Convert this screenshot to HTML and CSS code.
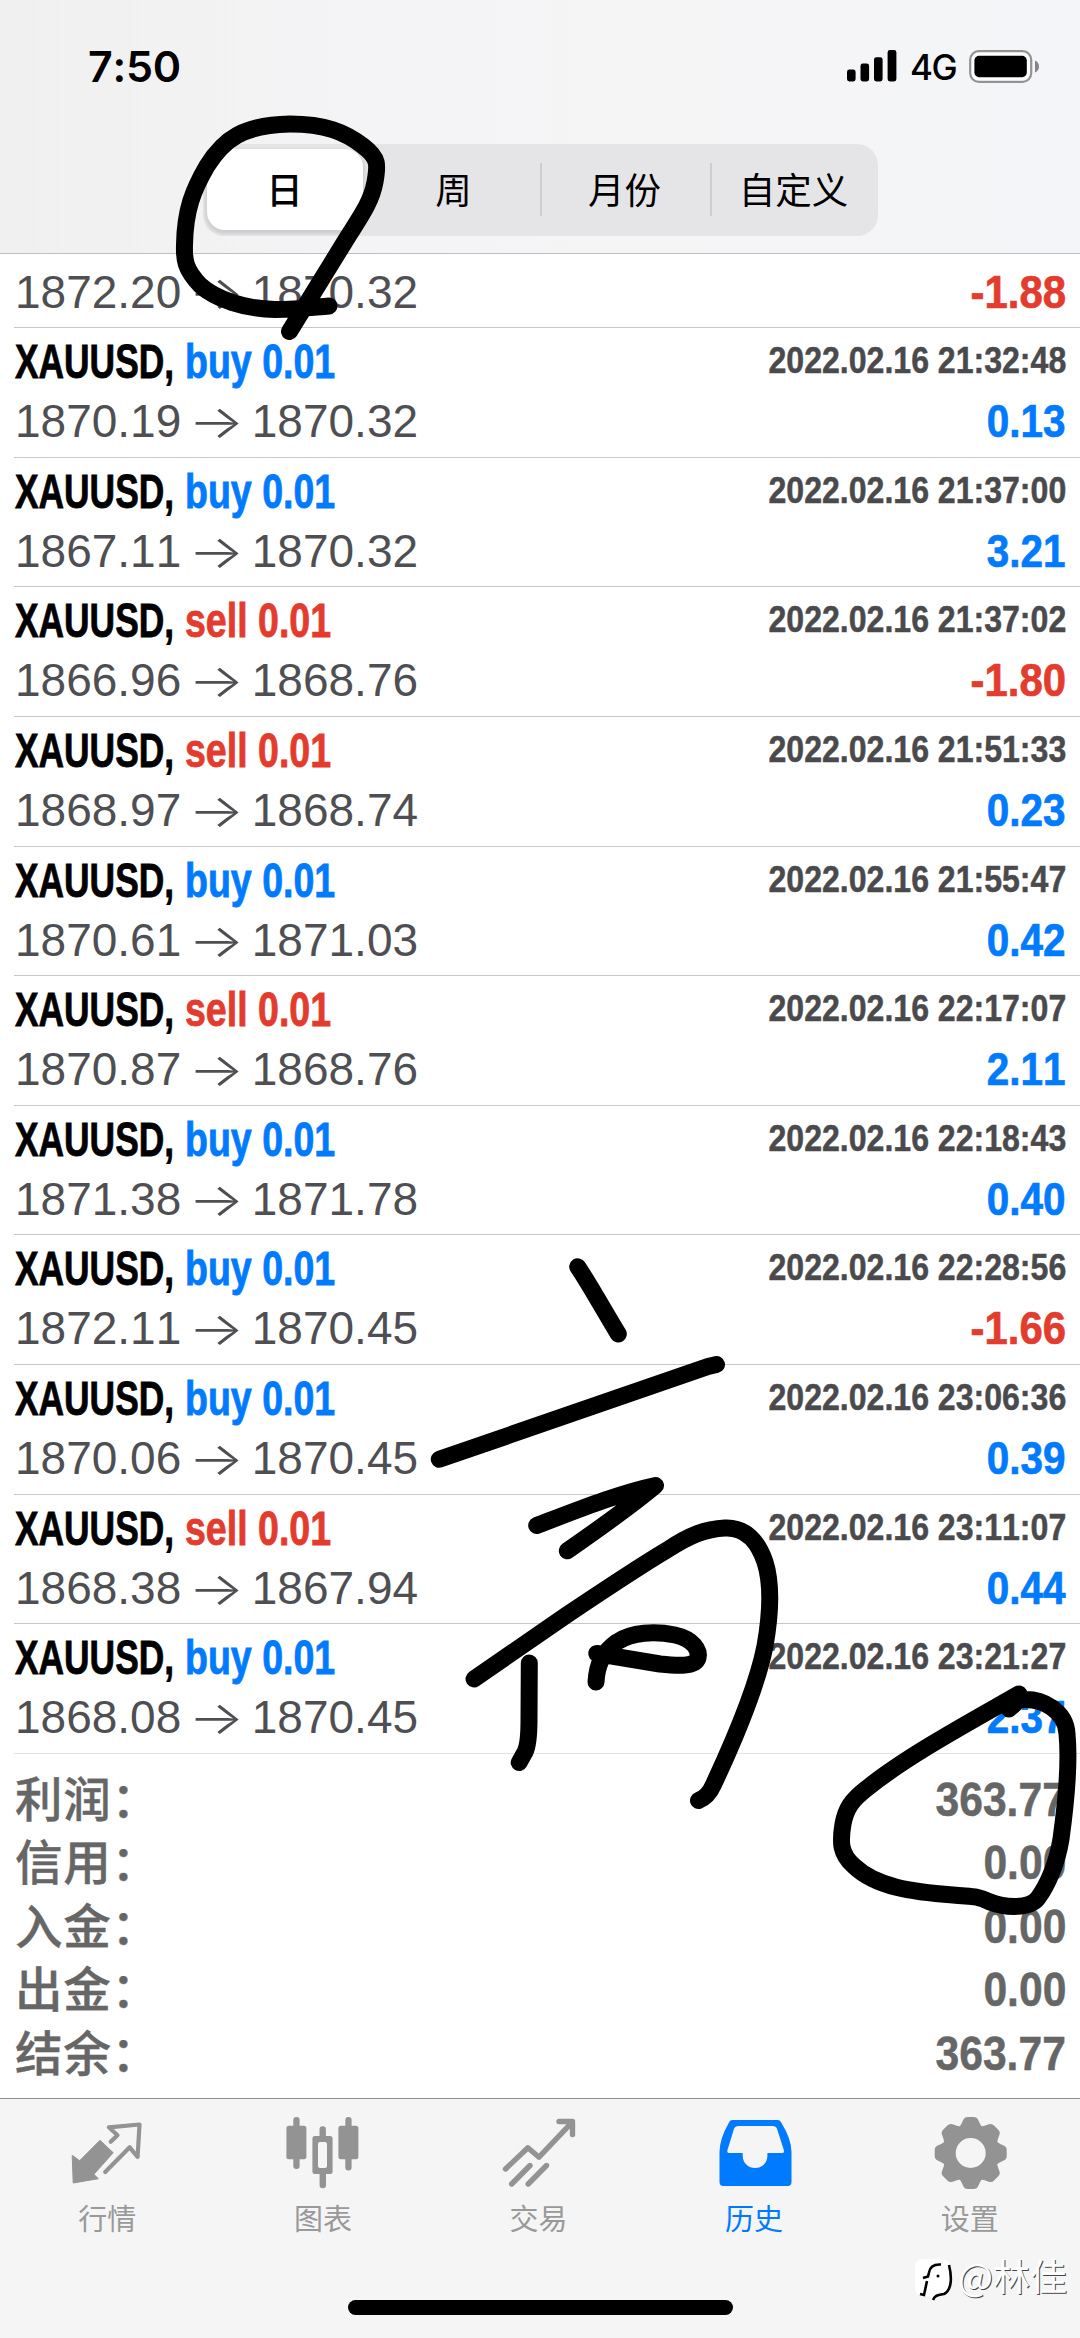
FILE: index.html
```html
<!DOCTYPE html>
<html lang="zh-CN">
<head>
<meta charset="utf-8">
<title>历史</title>
<link rel="stylesheet" href="styles.css">
</head>
<body>
<div class="screen">
  <header class="header">
    <div class="status">
      <span class="time">7:50</span>
      <div class="status-right">
        <svg class="signal" width="50" height="32" viewBox="0 0 50 32"><rect x="0" y="19.5" width="8.6" height="12" rx="2.4"/><rect x="13.5" y="13.5" width="8.6" height="18" rx="2.4"/><rect x="27" y="7.2" width="8.6" height="24.3" rx="2.4"/><rect x="40.6" y="0" width="8.8" height="31.5" rx="2.4"/></svg>
        <span class="network">4G</span>
        <svg class="battery" width="71" height="34" viewBox="0 0 71 34"><rect x="1.2" y="1.2" width="61" height="30.6" rx="8.5" fill="#fff" stroke="#939395" stroke-width="2.2"/><rect x="5.4" y="5.8" width="52.4" height="21.4" rx="4.6"/><path d="M66 10.5q4 1.800 4 6t-4 6z" fill="#858587"/></svg>
      </div>
    </div>
    <nav class="segments">
      <span class="segment selected">日</span>
      <span class="segment week">周</span>
      <span class="segment divided">月份</span>
      <span class="segment divided">自定义</span>
    </nav>
  </header>
  <main class="list" id="list"></main>
  <section class="totals">
    <div class="total"><span>利润：</span><b>363.77</b></div>
    <div class="total"><span>信用：</span><b>0.00</b></div>
    <div class="total"><span>入金：</span><b>0.00</b></div>
    <div class="total"><span>出金：</span><b>0.00</b></div>
    <div class="total"><span>结余：</span><b>363.77</b></div>
  </section>
  <footer class="footer">
    <nav class="tabs">
      <div class="tab">
        <svg width="80" height="80" viewBox="0 0 80 80"><path d="M4.200 45.300 11.700 50.700 32 30.300 45.200 42.700 25.900 64.300 30.300 68.700 5.200 73z" fill="currentColor" stroke="currentColor" stroke-width="1" stroke-linejoin="round"/><path d="M42.700 31.800 49.500 25.300 40.900 17.300 71.500 14.500 69.600 47 61.700 37.300 37.200 62" class="line" stroke-width="4.200"/></svg>
        <span>行情</span>
      </div>
      <div class="tab">
        <svg width="80" height="80" viewBox="0 0 80 80" fill="currentColor"><rect x="3.400" y="15.700" width="20" height="33.600" rx="2.500"/><rect x="10.300" y="7" width="6.300" height="52" rx="3"/><path d="M36.500 26V19.500a3.200 3.200 0 0 1 6.400 0V26h4.200a2.500 2.500 0 0 1 2.500 2.500v33a2.500 2.500 0 0 1-2.500 2.500H43v11a3.200 3.200 0 0 1-6.400 0V64h-4.700a2.500 2.500 0 0 1-2.500-2.500v-33a2.500 2.500 0 0 1 2.500-2.500zM37 32a2 2 0 0 0-2 2v22a2 2 0 0 0 2 2h5a2 2 0 0 0 2-2V34a2 2 0 0 0-2-2z"/><rect x="55.400" y="15.700" width="20" height="33.600" rx="2.500"/><rect x="62.300" y="7" width="6.300" height="53.600" rx="3"/></svg>
        <span>图表</span>
      </div>
      <div class="tab">
        <svg width="80" height="80" viewBox="0 0 80 80"><path d="M6.500 59 28.900 37.700 40 47.200 73.200 12.200M60 11.500H73.500V24.500" class="line" stroke-width="5.400"/><path d="M12.700 74 31 55.500M29.200 74 47.500 55.500" class="line" stroke-width="5.400"/></svg>
        <span>交易</span>
      </div>
      <div class="tab active">
        <svg width="80" height="80" viewBox="0 0 80 80"><path fill="currentColor" fill-rule="evenodd" d="M17.500 10h45q2.500 0 3.700 2.400Q76.500 29 76.500 42v30q0 4-4 4h-64q-4 0-4-4V42Q4.500 29 14 12.400 15 10 17.500 10zM23.500 16q-3.400 0-4.500 2.800L12.400 40.200q-.6 2.800 2 2.800h13.300v2.500c0 16.600 24.700 16.600 24.700 0V43h14.500q2.600 0 2-2.800L62 18.800Q61 16 57.500 16z"/></svg>
        <span>历史</span>
      </div>
      <div class="tab">
        <svg width="80" height="80" viewBox="0 0 80 80"><defs><path id="tooth" d="M-12 -25 Q-9 -29 -7.500 -33 Q-6.300 -36 -3 -36 H3 Q6.300 -36 7.500 -33 Q9 -29 12 -25z"/></defs><g transform="translate(40.700 43)" fill="currentColor"><circle r="21.500" fill="none" stroke="currentColor" stroke-width="13"/><use href="#tooth"/><use href="#tooth" transform="rotate(45)"/><use href="#tooth" transform="rotate(90)"/><use href="#tooth" transform="rotate(135)"/><use href="#tooth" transform="rotate(180)"/><use href="#tooth" transform="rotate(225)"/><use href="#tooth" transform="rotate(270)"/><use href="#tooth" transform="rotate(315)"/></g></svg>
        <span>设置</span>
      </div>
    </nav>
    <div class="home-bar"></div>
  </footer>

  <div class="watermark">
    <svg width="42" height="46" viewBox="0 0 42 46"><path d="M10 1h16q11 0 11 11v15q0 9-9 11-5 0-9 6l-3-6H10Q1 38 1 28V10Q1 1 10 1z" fill="#fff"/><path d="M35 7c3 12 3 25-5 29-6 1-9 1-11 6" fill="none" stroke="#000" stroke-width="2.600"/><path d="M27 6.500c-7-.5-11 2-12 8l-1 4-5 1.500M13 23l-3 14-4-1" fill="none" stroke="#000" stroke-width="2.600"/><circle cx="24" cy="18" r="1.500"/></svg>
    <span>@林佳</span>
  </div>

  <svg class="ink" width="1080" height="2338" viewBox="0 0 1080 2338">
    <path d="M329 306 C315 307 300 309.500 275 309.500 C245 309 215 299 200 285 C185 269 184 260 184.500 245 C185 210 193 190 207 166 C224 139 243 125 290 124 C325 124 345 132 363 146 C379 158 378 165 375 182 C371 204 358 220 344 243 L289.500 331.500"/>
    <path d="M577.700 1266.800 C590 1285 606 1314 618.300 1334"/>
    <path d="M439.300 1459.300 L708 1366.500 L716.500 1364.500"/>
    <path d="M536.700 1525.500 C580 1509 620 1493 655.500 1485.500 C630 1507 600 1528 567.300 1550.800"/>
    <path d="M474 1679 L566.700 1615 C610 1586 640 1566 667 1550 C690 1535 705 1529 725 1528 C745 1527 758 1541 765 1562 C772 1584 771 1612 765 1646 C758 1682 738 1732 713.300 1785 Q708 1797 698.500 1800.500"/>
    <path d="M529.300 1663 L529 1720 Q529 1744 525 1752 L519.200 1762.500"/>
    <path d="M596 1682 C597 1664 603 1652 617 1642 C632 1632 655 1631 675 1635 C693 1639 700 1650 698 1658 C695 1667 678 1666 660 1664 L596.700 1653.500"/>
    <path d="M1009 1709 L1019 1700 C1042 1697 1066 1711 1067 1734 C1070 1765 1065 1810 1061 1839 C1057 1864 1047 1886 1038 1898 C1030 1909 1006 1908 990 1902 C975 1895 972 1897 953 1895 C912 1892 876 1887 854 1866 C840 1854 840 1842 843 1824 C846 1808 852 1800 866 1789 C907 1756 970 1722 1019 1694"/>
  </svg>
</div>
<script src="list.js"></script>
</body>
</html>
```
FILE: list.js
```js
const deals = [
  ["buy", "1872.20", "1870.32", "", "-1.88"],
  ["buy", "1870.19", "1870.32", "2022.02.16 21:32:48", "0.13"],
  ["buy", "1867.11", "1870.32", "2022.02.16 21:37:00", "3.21"],
  ["sell", "1866.96", "1868.76", "2022.02.16 21:37:02", "-1.80"],
  ["sell", "1868.97", "1868.74", "2022.02.16 21:51:33", "0.23"],
  ["buy", "1870.61", "1871.03", "2022.02.16 21:55:47", "0.42"],
  ["sell", "1870.87", "1868.76", "2022.02.16 22:17:07", "2.11"],
  ["buy", "1871.38", "1871.78", "2022.02.16 22:18:43", "0.40"],
  ["buy", "1872.11", "1870.45", "2022.02.16 22:28:56", "-1.66"],
  ["buy", "1870.06", "1870.45", "2022.02.16 23:06:36", "0.39"],
  ["sell", "1868.38", "1867.94", "2022.02.16 23:11:07", "0.44"],
  ["buy", "1868.08", "1870.45", "2022.02.16 23:21:27", "2.37"]
];

document.getElementById("list").innerHTML = deals.map(([side, open, close, time, profit]) => `
  <article class="deal">
    <div class="deal-top">
      <div class="title"><span class="symbol">XAUUSD,</span><span class="side ${side}">${side} 0.01</span></div>
      <span class="date">${time}</span>
    </div>
    <div class="deal-bottom">
      <div class="prices"><span>${open}</span><span class="arrow">→</span><span>${close}</span></div>
      <b class="profit ${profit.startsWith("-") ? "loss" : ""}">${profit}</b>
    </div>
  </article>`).join("");
```
FILE: styles.css
```css
* { box-sizing: border-box; }
body { margin: 0; background: #fff; }
.screen {
  position: relative;
  width: 1080px;
  height: 2338px;
  display: flex;
  flex-direction: column;
  overflow: hidden;
  font-family: "Liberation Sans", "Noto Sans CJK SC", sans-serif;
  font-kerning: none;
  color: #000;
}

.header {
  height: 254px;
  flex: none;
  background: linear-gradient(90deg, #f0f0f0, #f4f4f6 35%, #f5f5f6 60%, #f4f5f8);
  border-bottom: 1.5px solid #bfbfc2;
}
.status {
  height: 144px;
  padding: 0 40px 0 88px;
  display: flex;
  justify-content: space-between;
  align-items: flex-start;
  font-family: Inter, sans-serif;
}
.time { margin-top: 40px; font-size: 43px; line-height: 53px; font-weight: 600; letter-spacing: -.3px; }
.status-right { display: flex; padding-top: 50px; }
.network { margin: -5px 0 0 13px; width: 59px; font-size: 35px; line-height: 44px; font-weight: 500; letter-spacing: -1.500px; }

.segments {
  width: 675px;
  height: 92px;
  margin: 0 auto;
  padding: 5px 0 5px 4px;
  display: grid;
  grid-template-columns: 156px 177px 170px 168px;
  border-radius: 21px;
  background: #e5e5e7;
  font: 36.500px/80px "Noto Sans CJK SC", sans-serif;
  text-align: center;
}
.segment { position: relative; }
.week { padding-left: 5px; }
.selected {
  height: 81px;
  background: #fff;
  border-radius: 18px;
  font-weight: 500;
  box-shadow: 0 2px 3px 2px #cfcfd2;
}
.divided::before {
  content: "";
  position: absolute;
  left: 0;
  top: 14px;
  width: 2px;
  height: 53px;
  background: #cdcdd0;
}

.list { flex: none; height: 1500px; overflow: hidden; }
.deal { height: 129.620px; margin-left: 14px; padding: 8px 14px 0 1px; border-bottom: 1.500px solid #c6c6c8; }
.deal:first-child { margin-top: -55.500px; }
.deal:first-child .title { margin-top: -6px; }
.deal:last-child { border-color: #e4e4e6; }
.deal-top, .deal-bottom { display: flex; justify-content: space-between; }
.deal-top { height: 58px; }
.title { display: flex; font-size: 47.500px; line-height: 51px; font-weight: 700; white-space: nowrap; -webkit-text-stroke: .8px currentColor; }
.symbol { width: 169.500px; transform: scaleX(.744); transform-origin: 0 0; }
.side { transform: scaleX(.79); transform-origin: 0 0; }
.buy { color: #007aff; }
.sell { color: #e33c2e; }
.date { font-size: 37.500px; font-weight: 700; line-height: 49px; color: #4a4a4d; transform: scaleX(.855); transform-origin: 100% 0; white-space: nowrap; -webkit-text-stroke: .5px currentColor; }
.prices { display: flex; font-size: 46px; line-height: 54px; color: #4f4f53; }
.arrow { width: 70.500px; text-align: center; font-family: Inter, sans-serif; font-weight: 300; transform: scaleX(1.28); }
.profit { font-size: 46.500px; line-height: 54px; color: #007aff; transform: scaleX(.87); transform-origin: 100% 0; -webkit-text-stroke: .7px currentColor; }
.profit.loss { color: #e33c2e; transform: scaleX(.9); }

.totals { flex: none; height: 344px; padding: 11px 14px 0 15px; color: #666; }
.total { height: 63.400px; display: flex; justify-content: space-between; line-height: 64px; }
.total span { font: 500 47.500px/64px "Noto Sans CJK SC", sans-serif; letter-spacing: .8px; -webkit-text-stroke: .4px currentColor; }
.total b { font-size: 49px; line-height: 68px; transform: scaleX(.87); transform-origin: 100% 0; -webkit-text-stroke: .5px currentColor; }

.footer { flex: none; height: 240px; background: #f5f5f5; border-top: 1.500px solid #8e8e90; }
.tabs { display: flex; height: 201px; padding: 11px 2px 0 0; }
.tab { flex: 1; display: flex; flex-direction: column; align-items: center; color: #939393; font: 29px/38px "Noto Sans CJK SC", sans-serif; }
.tab svg { flex: none; margin-bottom: 8px; }
.tab span { margin-right: 1px; color: #999; }
.tab.active, .tab.active span { color: #007aff; }
.line { fill: none; stroke: currentColor; stroke-linecap: round; stroke-linejoin: round; }
.home-bar { width: 385px; height: 14.500px; margin: 0 auto; border-radius: 8px; background: #000; }

.watermark {
  position: absolute;
  left: 914px;
  top: 2258px;
  display: flex;
  align-items: flex-start;
  gap: 2px;
  color: #fff;
  font: 37px/38px "Noto Sans CJK SC", sans-serif;
  text-shadow: 1px 1px 0 #444;
}
.watermark span { margin-top: -2px; }
.ink { position: absolute; left: 0; top: 0; fill: none; stroke: #000; stroke-width: 17px; stroke-linecap: round; stroke-linejoin: round; }
```
